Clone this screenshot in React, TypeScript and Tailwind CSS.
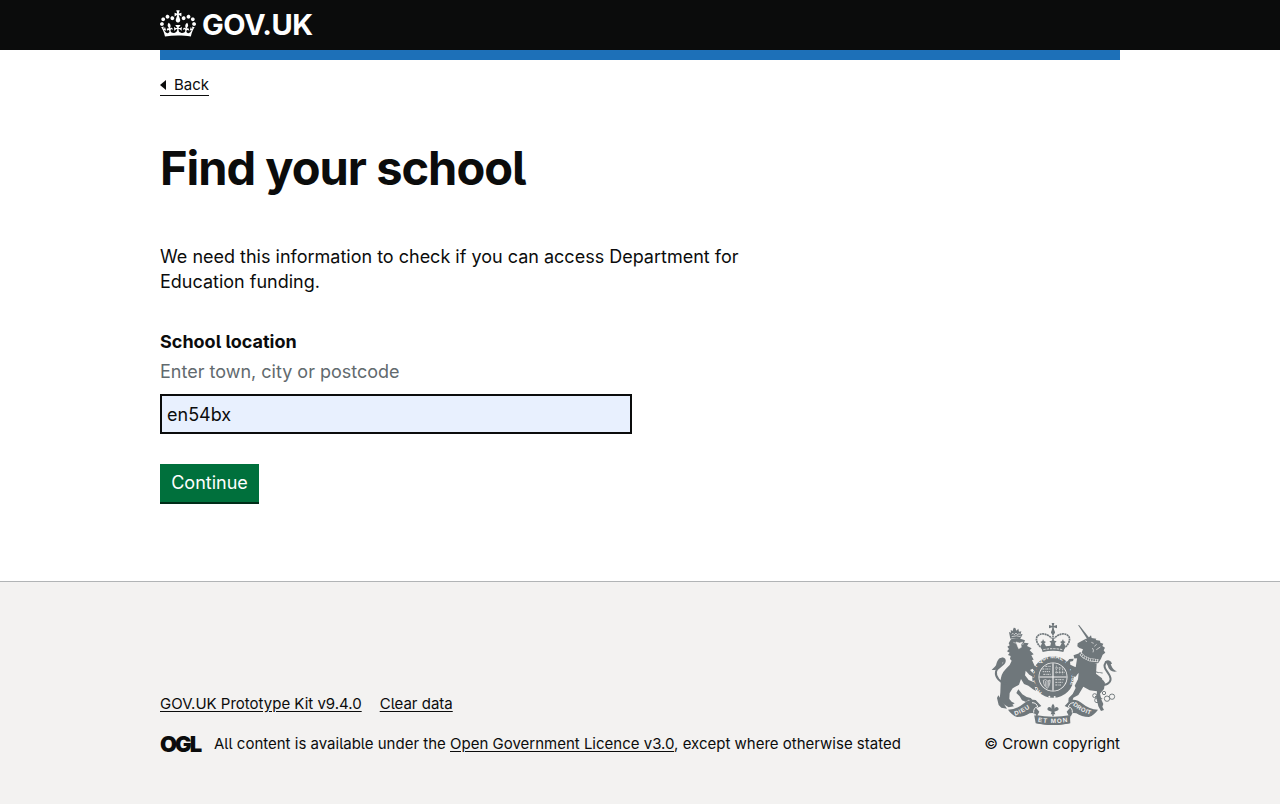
import React from "react";

function CrownLogo() {
  return (
    <svg viewBox="0 0 132 97" className="block h-[27px] w-9 shrink-0" fill="currentColor" aria-hidden="true">
      <path
        fillRule="evenodd"
        d="M25 30.2c3.5 1.5 7.7-.2 9.1-3.7 1.5-3.6-.2-7.8-3.9-9.2-3.6-1.4-7.6.3-9.1 3.9-1.4 3.5.3 7.5 3.9 9zM9 39.5c3.6 1.5 7.8-.2 9.2-3.7 1.5-3.6-.2-7.8-3.9-9.1-3.6-1.5-7.6.2-9.1 3.8-1.4 3.5.3 7.5 3.8 9zM4.4 57.2c3.5 1.5 7.7-.2 9.1-3.8 1.5-3.6-.2-7.7-3.9-9.1-3.5-1.5-7.6.3-9.1 3.8-1.4 3.5.3 7.6 3.9 9.1zm38.3-21.4c3.5 1.5 7.7-.2 9.1-3.8 1.5-3.6-.2-7.7-3.9-9.1-3.6-1.5-7.6.3-9.1 3.8-1.3 3.6.4 7.7 3.9 9.1zm64.4-5.6c-3.6 1.5-7.8-.2-9.1-3.7-1.5-3.6.2-7.8 3.8-9.2 3.6-1.4 7.7.3 9.2 3.9 1.3 3.5-.4 7.5-3.9 9zm15.9 9.3c-3.6 1.5-7.7-.2-9.1-3.7-1.5-3.6.2-7.8 3.7-9.1 3.6-1.5 7.7.2 9.2 3.8 1.5 3.5-.3 7.5-3.8 9zm4.7 17.7c-3.6 1.5-7.8-.2-9.2-3.8-1.5-3.6.2-7.7 3.9-9.1 3.6-1.5 7.7.3 9.2 3.8 1.3 3.5-.4 7.6-3.9 9.1zM89.3 35.8c-3.6 1.5-7.8-.2-9.2-3.8-1.4-3.6.2-7.7 3.9-9.1 3.6-1.5 7.7.3 9.2 3.8 1.4 3.6-.3 7.7-3.9 9.1zM69.7 17.7l8.9 4.7V9.3l-8.9 2.8c-.2-.3-.5-.6-.9-.9L72.4 0H59.6l3.5 11.2c-.3.3-.6.5-.9.9l-8.8-2.8v13.1l8.8-4.7c.3.3.6.7.9.9l-5 15.4v.1c-.2.8-.4 1.6-.4 2.4 0 4.1 3.1 7.5 7 8.1h.2c.3 0 .7.1 1 .1.4 0 .7 0 1-.1h.2c4-.6 7.1-4.1 7.1-8.1 0-.8-.1-1.7-.4-2.4V34l-5.1-15.4c.4-.2.7-.6 1-.9zM66 92.8c16.9 0 32.8 1.1 47.1 3.2 4-16.9 8.9-26.7 14-33.5l-9.6-3.4c1 4.9 1.1 7.2 0 10.2-1.5-1.4-3-4.3-4.2-8.7L108.6 76c2.8-2 5-3.2 7.5-3.3-4.4 9.4-10 11.9-13.6 11.2-4.3-.8-6.3-4.6-5.6-7.9 1-4.7 5.7-5.9 8-.5 4.3-8.7-3-11.4-7.6-8.8 7.1-7.2 7.9-13.5 2.1-21.1-8 6.1-8.1 12.3-4.5 20.8-4.7-5.4-12.1-2.5-9.5 6.2 3.4-5.2 7.9-2 7.2 3.1-.6 4.3-6.4 7.8-13.5 7.2-10.3-.9-10.9-8-11.2-13.8 2.5-.5 7.1 1.8 11 7.3L80.2 60c-4.1 4.4-8 5.3-12.3 5.4 1.4-4.4 8-11.6 8-11.6H55.5s6.4 7.2 7.9 11.6c-4.2-.1-8-1-12.3-5.4l1.4 16.4c3.9-5.5 8.5-7.7 10.9-7.3-.3 5.8-.9 12.8-11.1 13.8-7.2.6-12.9-2.9-13.5-7.2-.7-5 3.8-8.3 7.1-3.1 2.7-8.7-4.6-11.6-9.4-6.2 3.7-8.5 3.6-14.7-4.6-20.8-5.8 7.6-5 13.9 2.2 21.1-4.7-2.6-11.9.1-7.7 8.8 2.3-5.5 7.1-4.2 8.1.5.7 3.3-1.3 7.1-5.7 7.9-3.5.7-9-1.8-13.5-11.2 2.5.1 4.7 1.3 7.5 3.3l-4.7-15.4c-1.2 4.4-2.7 7.2-4.3 8.7-1.1-3-.9-5.3 0-10.2l-9.5 3.4c5 6.9 9.9 16.7 14 33.5 14.8-2.1 30.8-3.2 47.7-3.2z"
      />
    </svg>
  );
}

function RoyalArms() {
  const ink = "#6f777b";
  const paper = "#f3f2f1";
  return (
    <svg viewBox="30 33 390 309" className="block h-[103px] w-[130px]" fill={ink} aria-hidden="true">
      {/* imperial crown */}
      <path d="M215 36h8l-2 9 10-3v10l-10-3 2 12h-8l2-12-10 3V42l10 3z" />
      <circle cx="219" cy="64" r="6" />
      <path d="M188 112C166 100 162 72 184 69c14-2 24 6 31 13M250 112c22-12 26-40 4-43-14-2-24 6-31 13" fill="none" stroke={ink} strokeWidth="5" strokeDasharray="6 1.5" />
      <path d="M219 68v42" stroke={ink} strokeWidth="5" strokeDasharray="5 1.5" />
      <path d="M182 105l4-8-5-4 6-3 2-6 3 6 6 3-5 4 5 9 13-2 2-8-5-5 7-2 4-7 4 7 7 2-5 5 2 8 13 2 5-9-5-4 6-3 3-6 2 6 6 3-5 4 4 8-6 18q-31-7-62 0z" />
      <path d="M190 116q29-6 58 0" fill="none" stroke={paper} strokeWidth="2.5" strokeDasharray="7 3" />

      {/* garter and shield */}
      <circle cx="219" cy="198" r="53" fill={paper} stroke={ink} strokeWidth="19" />
      <circle cx="219" cy="198" r="41" />
      <path d="M219 157v82M178 198h82" stroke={paper} strokeWidth="3.5" />
      <path d="M187 174h25M188 182h24M190 190h22M196 166h16M226 206h26M226 214h24M226 222h19" stroke={paper} strokeWidth="2.4" strokeDasharray="5 2 3 2" />
      <path d="M229 164v25M239 169v20M248 174v16M226 171h24M226 184h28" stroke={paper} strokeWidth="2.2" strokeDasharray="3 2" />
      <path d="M190 208c0 14 6 20 12 24 6-7 8-14 8-25l-7 3-6-4zM196 210v15M201 211v17M206 210v14" fill="none" stroke={paper} strokeWidth="2" />
      <path id="garter" d="M185.500 245.500A58 58 0 1 1 256 242" transform="translate(6.500 6) scale(.97)" fill="none" />
      <text fill={paper} fontFamily="Liberation Sans, sans-serif" fontWeight="700" fontSize="17">
        <textPath href="#garter" textLength="255">HONI SOIT QUI MAL Y PENSE</textPath>
      </text>
      <circle cx="208" cy="257" r="3" fill={paper} />
      <circle cx="224" cy="258" r="3" fill={paper} />

      {/* lion */}
      <path d="M91 83l-4-20 6 2-1-8 6 3 3-10 5 1 3 8 6-6 2 9 7-1-2 8 6 1-8 15q-15-6-29-2z" />
      <path d="M95 70l4-3 4 4 5-5 4 5 6-3 4 5M95 77q15-5 27 0" fill="none" stroke={paper} strokeWidth="2" />
      <path d="M93 85q16-7 33 0l9 3-3 7 14 2-5 8 14 7-6 6 12 12-7 3 7 13-5 1 8 18 5 3-2 17-9-12-8 4 11 11 2 12-15-9-11-12-2 14 11 14 16 7 8 10-6 3 4 13-9-5-14-11-13-5-9-15-6 17-19 11-9 14-1 18 7 8 9 5-7 4 5 5-16 3-15-9-12-16 2-20 1-28q-2-25 16-43l11-11 6-13-5-5 2-9-8-3 5-7-8-4 6-7-5-7 7-4-3-6z" />
      <path d="M108 93l11 3 9-3-5 8 1 8-8 4-4-9zM100 94l9 3M132 98l-6 2" fill={paper} stroke={paper} strokeWidth="1.500" />
      <path d="M81 219C60 216 45 198 48 182c3-14 24-18 26-30 2-13-11-12-15-3" fill="none" stroke={ink} strokeWidth="6" />
      <path d="M70 141c-13-4-18 7-22 22-5 7-8 9-13 14 13 2 29-5 32-22l9-6z" />
      <path d="M115 235l12 15 13 8 12 3 8 8-14-3-8 7-12-5-7-12-10-10zM55 253l-4 8 5 21 8 8 17 3" />

      {/* unicorn */}
      <path d="M294 42l4 1 30 38-6 4z" />
      <path d="M324 82l9-9 2 8 14 2-2 4 13 2 1 6 9 3-3 7 8 5-4 8 5 7-8 6-5 12-8 13-15 4-22-4-17-9-9-7 3-8 8-3 6-14-11-4-6-5 1-9 12-7 13-7z" />
      <path d="M298 125l14 13 17 8 26 3" fill="none" stroke={paper} strokeWidth="9" />
      <path d="M298 125l14 13 17 8 26 3" fill="none" stroke={ink} strokeWidth="6" strokeDasharray="5 2" />
      <path d="M334 94l7 3M316 89l5 3M337 111q6 6 2 13M350 100l-7 6M361 108l-12 8" stroke={paper} strokeWidth="2" fill="none" />
      <path d="M292 138l33 17 25 3-2 30 17 13 10 14-3 19-12 14 5 20 5 11-3 8 5 10-9 3-8-14-6-25 2-20-22-3-19-11-15 25-15 8-3 11-12 1 1-11 12-12 9-18-3-7 10-19 2-18-22 3-6-7 6-9-10-5-5-13 9-12 13-1-2 7-9 2 1 9 16 8z" />
      <path d="M269 151l-12 4M285 142l-2-8 15-5-7 13M286 171l10 10-10 14-8-1 7-10-9-8z" stroke={ink} strokeWidth="4" />
      <path d="M371 222c18-3 25-14 18-28-8-16-22-25-12-39 5-7 15-4 16 4" fill="none" stroke={ink} strokeWidth="6" />
      <path d="M374 151c11-5 17 2 20 13 4 9 8 13 17 17-13 4-24-3-27-15l-5-11z" />
      <g fill="none" stroke={ink} strokeWidth="2.800">
        <circle cx="344" cy="254" r="6" />
        <circle cx="351" cy="268" r="7" />
        <circle cx="381" cy="263" r="8" />
        <circle cx="396" cy="257" r="8" />
        <circle cx="372" cy="246" r="5" />
        <path d="M326 166q14 20 42 20M345 256l22 7" />
      </g>
      <g fill={paper}>
        <circle cx="359" cy="188" r="3" />
        <circle cx="370" cy="205" r="3" />
      </g>

      {/* motto ribbon */}
      <path d="M84 296q27-1 45-17t38-12l17 18-15 7 9 10-7 14q-6-14-22-9-15 11-38 11-16-6-27-22z" />
      <path d="M354 296q-27-1-45-17t-38-12l-17 18 15 7-9 10 7 14q6-14 22-9 15 11 38 11 16-6 27-22z" />
      <path d="M163 294q-5 11 2 21 54 10 108 0 7-10 2-21l-6 6 2 37q-52 11-104 0l-4-22z" />
      <path d="M166 312q53 11 106 0l-4 25q-49 10-98 0z" />
      <path d="M156 275q14 0 17 13-13 1-12 17M282 275q-14 0-17 13 13 1 12 17" fill="none" stroke={paper} strokeWidth="3" />
      <path id="motto-left" d="M105 313q23-5 54-29" fill="none" />
      <path id="motto-center" d="M173 332q46 8 93 0" fill="none" />
      <path id="motto-right" d="M278 282q25 22 57 30" fill="none" />
      <g fill={paper} fontFamily="Liberation Sans, sans-serif" fontWeight="700">
        <text fontSize="18">
          <textPath href="#motto-left" textLength="50">DIEU</textPath>
        </text>
        <text fontSize="19">
          <textPath href="#motto-center" textLength="90">ET MON</textPath>
        </text>
        <text fontSize="18">
          <textPath href="#motto-right" textLength="61">DROIT</textPath>
        </text>
      </g>
      <path d="M219 278q8 10 3 16 7-10 13-3 3 7-6 9l-6 2 3 8h-14l3-8-6-2q-9-2-6-9 6-7 13 3-5-6 3-16zM217 302h4v14h-4z" />
    </svg>
  );
}

export default function App() {
  return (
    <div className="flex h-[804px] flex-col bg-white font-['Inter','Liberation_Sans',sans-serif] text-[#0b0c0c] [font-feature-settings:'cv05']">
      <header className="h-[50px] shrink-0 bg-[#0b0c0c]">
        <div className="mx-auto flex w-[960px] items-start gap-[6px] pt-[10px] text-white">
          <CrownLogo />
          <span className="text-[29px] leading-[30px] font-bold tracking-[-0.5px]">GOV.UK</span>
        </div>
      </header>

      <div className="mx-auto w-[960px] grow">
        <div className="h-[10px] bg-[#1d70b8]" />
        <a href="#" className="mt-[15px] inline-flex h-[21px] items-center border-b border-[#0b0c0c]">
          <svg viewBox="0 0 6 10" className="mr-2 h-[10px] w-[6px]" fill="currentColor" aria-hidden="true">
            <path d="M0 5l6-5v10z" />
          </svg>
          <span className="text-[15px] leading-5">Back</span>
        </a>
        <main className="pt-[47px]">
          <h1 className="text-[47px] leading-[50px] font-bold tracking-[-1px]">Find your school</h1>
          <p className="mt-[51px] text-[18px] leading-[25px] whitespace-nowrap">
            We need this information to check if you can access Department for
            <br />
            Education funding.
          </p>
          <form className="mt-[35px]">
            <label htmlFor="location" className="block text-[18px] leading-[25px] font-bold">
              School location
            </label>
            <div className="mt-[5px] text-[18px] leading-[25px] text-[#626a6e]">Enter town, city or postcode</div>
            <input
              id="location"
              type="text"
              defaultValue="en54bx"
              className="mt-[10px] block h-10 w-[472px] border-2 border-[#0b0c0c] bg-[#e8f0fe] px-[5px] text-[18px] outline-none"
            />
            <button
              type="button"
              className="mt-[30px] block h-[38px] w-[99px] bg-[#00703c] text-center text-[18px] leading-[38px] text-white shadow-[0_2px_0_#002d18]"
            >
              Continue
            </button>
          </form>
        </main>
      </div>

      <footer className="h-[223px] shrink-0 border-t border-[#b1b4b6] bg-[#f3f2f1] pt-10">
        <div className="mx-auto flex h-[132px] w-[960px] items-end justify-between text-[15px] leading-5">
          <div>
            <div className="flex gap-[18px]">
              <a href="#" className="underline underline-offset-2">GOV.UK Prototype Kit v9.4.0</a>
              <a href="#" className="underline underline-offset-2">Clear data</a>
            </div>
            <div className="mt-5 flex">
              <span className="w-[54px] text-[22px] leading-5 font-black tracking-[-2px]">OGL</span>
              <span className="whitespace-nowrap">
                All content is available under the{" "}
                <a href="#" className="underline underline-offset-2">Open Government Licence v3.0</a>, except where otherwise stated
              </span>
            </div>
          </div>
          <div className="flex w-[130px] flex-col items-end">
            <RoyalArms />
            <a href="#" className="mt-[9px] whitespace-nowrap">© Crown copyright</a>
          </div>
        </div>
      </footer>
    </div>
  );
}
